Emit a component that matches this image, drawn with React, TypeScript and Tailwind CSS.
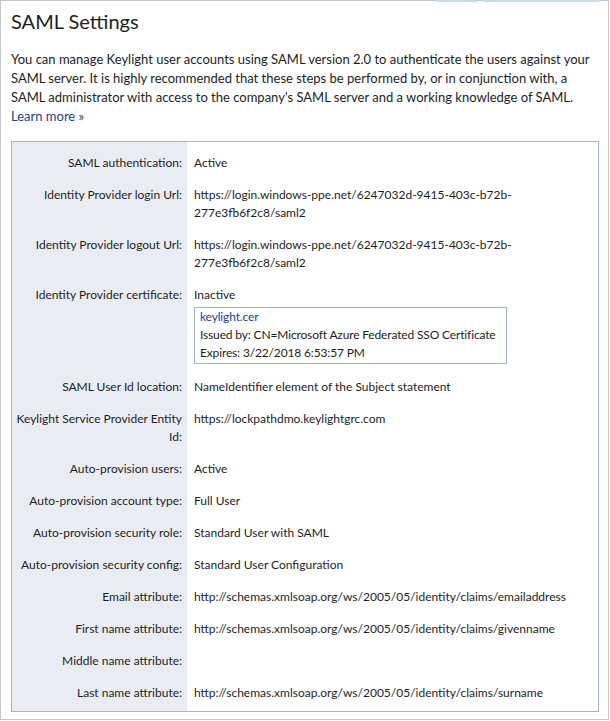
const rows: { label: string; value?: string; cert?: boolean }[] = [
  { label: "SAML authentication:", value: "Active" },
  {
    label: "Identity Provider login Url:",
    value: "https://login.windows-ppe.net/6247032d-9415-403c-b72b-277e3fb6f2c8/saml2",
  },
  {
    label: "Identity Provider logout Url:",
    value: "https://login.windows-ppe.net/6247032d-9415-403c-b72b-277e3fb6f2c8/saml2",
  },
  { label: "Identity Provider certificate:", value: "Inactive", cert: true },
  { label: "SAML User Id location:", value: "NameIdentifier element of the Subject statement" },
  { label: "Keylight Service Provider Entity Id:", value: "https://lockpathdmo.keylightgrc.com" },
  { label: "Auto-provision users:", value: "Active" },
  { label: "Auto-provision account type:", value: "Full User" },
  { label: "Auto-provision security role:", value: "Standard User with SAML" },
  { label: "Auto-provision security config:", value: "Standard User Configuration" },
  { label: "Email attribute:", value: "http://schemas.xmlsoap.org/ws/2005/05/identity/claims/emailaddress" },
  { label: "First name attribute:", value: "http://schemas.xmlsoap.org/ws/2005/05/identity/claims/givenname" },
  { label: "Middle name attribute:" },
  { label: "Last name attribute:", value: "http://schemas.xmlsoap.org/ws/2005/05/identity/claims/surname" },
];

export default function App() {
  return (
    <div className="font-['Lato',sans-serif] text-[13px] leading-[19px] text-[#1e1e1e]">
      <div className="relative w-[609px] h-[720px] border border-[#c6c6c6] bg-white pl-[10px] pr-[9px] pt-[7px] pb-[9px]">
        {/* cut-off tabs along the top edge */}
        <div className="absolute -top-px left-[436px] h-[2px] w-[41px] bg-[#c9dbef]" />
        <div className="absolute -top-px left-[482px] h-[2px] w-[116px] bg-[#c9dbef]" />

        <h1 className="text-[20px] leading-[26px] font-normal">SAML Settings</h1>

        <p className="mt-[16px] w-[590px]">
          You can manage Keylight user accounts using SAML version 2.0 to authenticate the users against your SAML
          server. It is highly recommended that these steps be performed by, or in conjunction with, a SAML
          administrator with access to the company's SAML server and a working knowledge of SAML.{" "}
          <a href="#" className="text-[#213f92]">
            Learn more »
          </a>
        </p>

        <div className="mt-[15px] w-[588px] border border-[#a9b6c9] pt-[5px] pb-[2px] bg-[linear-gradient(to_right,#e9edf3_175px,#ffffff_175px)]">
          <div className="grid grid-cols-[175px_1fr] text-[12px] leading-[18px]">
            {rows.map((r) => (
              <div key={r.label} className="contents">
                <div className="pr-[5px] pl-[4px] py-[7px] text-right">{r.label}</div>
                <div className="pl-[7px] pr-[10px] py-[7px]">
                  <div>{r.value}</div>
                  {r.cert && (
                    <div className="mt-[3px] w-[313px] border border-[#a9b6c9] px-[5px] pb-px whitespace-nowrap tracking-[-0.15px]">
                      <a href="#" className="block text-[#213f92]">
                        keylight.cer
                      </a>
                      <div>Issued by: CN=Microsoft Azure Federated SSO Certificate</div>
                      <div>Expires: 3/22/2018 6:53:57 PM</div>
                    </div>
                  )}
                </div>
              </div>
            ))}
          </div>
        </div>
      </div>
    </div>
  );
}
